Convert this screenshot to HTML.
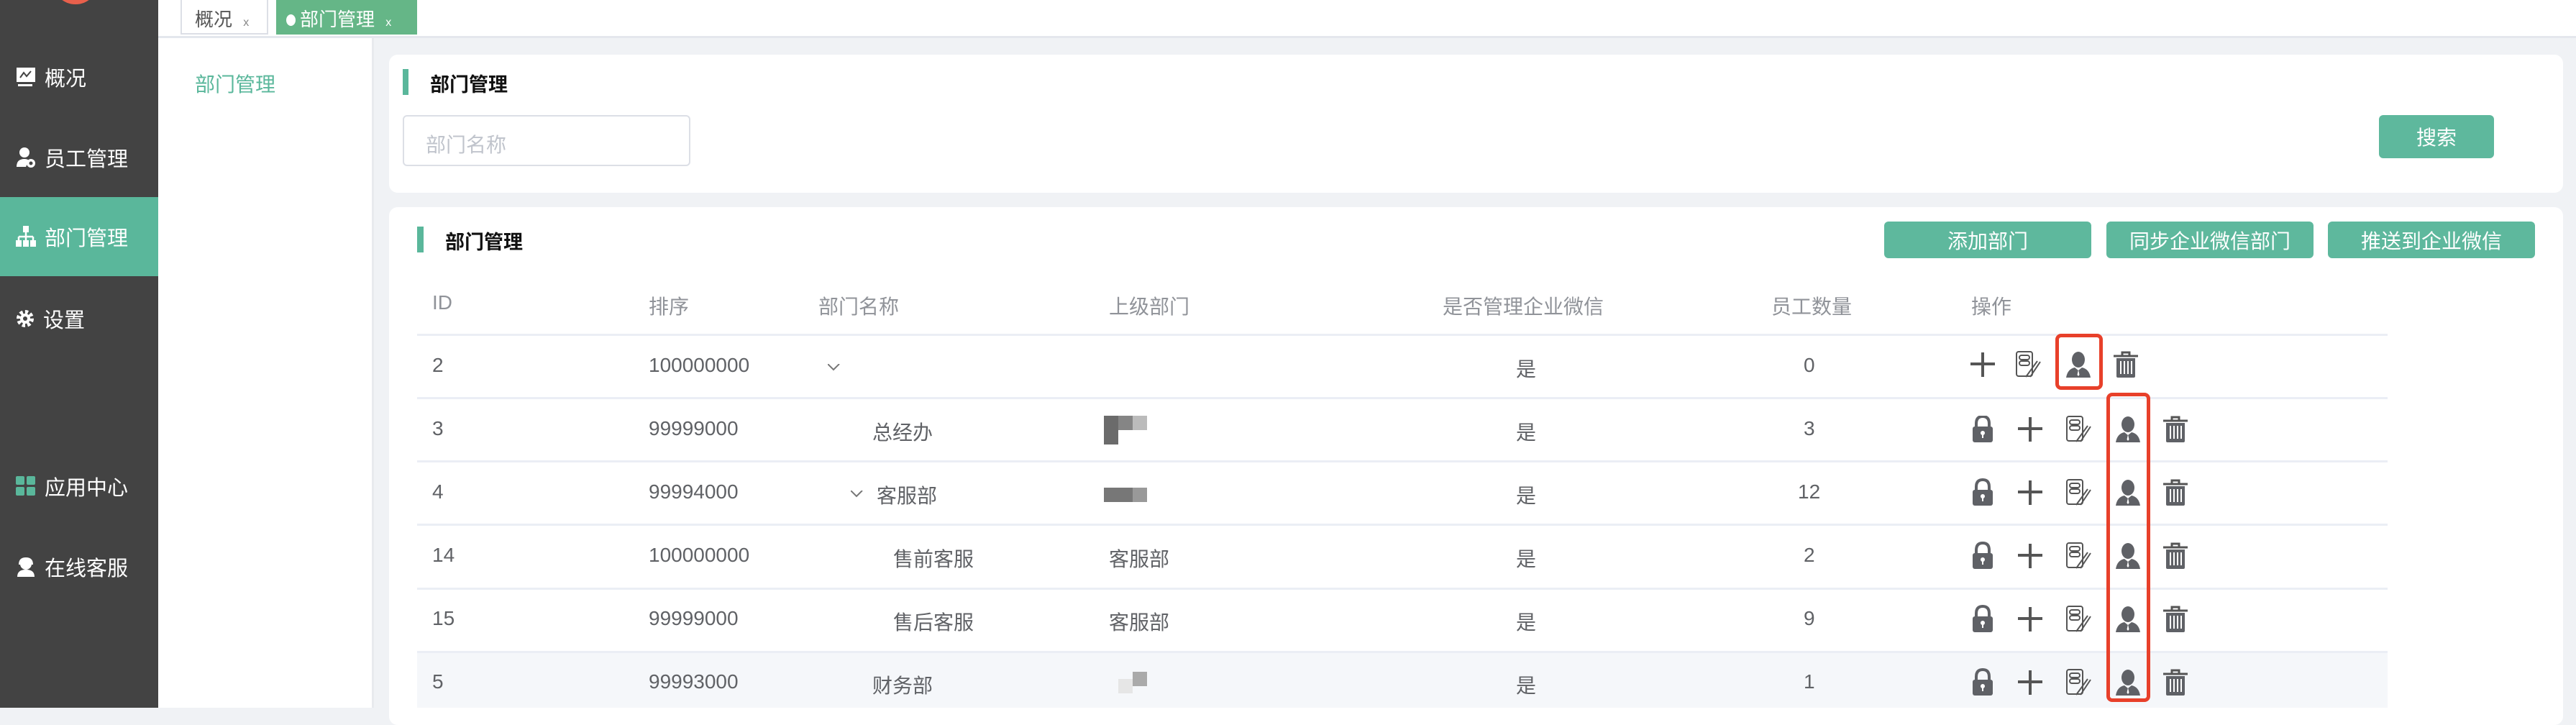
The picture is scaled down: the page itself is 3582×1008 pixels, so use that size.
<!DOCTYPE html>
<html><head><meta charset="utf-8"><style>
*{margin:0;padding:0;box-sizing:border-box}
body{width:3582px;height:984px;overflow:hidden;background:#f0f2f5;font-family:"Liberation Sans","Noto Sans CJK SC",sans-serif;position:relative}
.a{position:absolute;white-space:nowrap}
.side{left:0;top:0;width:220px;height:984px;background:#434343}
.si{left:0;width:220px;height:110px;color:#fff;font-size:29px;display:flex;align-items:center;padding-left:22px}
.si svg{margin-right:12px}
.card{background:#fff;border-radius:12px}
.btn{background:#5eb89d;color:#fff;font-size:28px;border-radius:6px;display:flex;align-items:center;justify-content:center}
.th{color:#909399;font-size:28px;top:405px}
.td{color:#606266;font-size:28px}
.line{left:580px;width:2740px;height:3px;background:#ebeef5}
</style></head><body>
<div class="a side"></div>
<div class="a" style="left:73px;top:-58px;width:64px;height:64px;border-radius:50%;background:#e8604c"></div>
<div class="a si" style="top:52px"><svg width="28" height="28" viewBox="0 0 28 28"><rect x="1" y="1" width="26" height="20" fill="#fff"/><path d="M6 15 L11 8 L15 13 L21 6" stroke="#434343" stroke-width="2" fill="none"/><rect x="3" y="24" width="20" height="3" fill="#fff"/></svg>概况</div>
<div class="a si" style="top:164px"><svg width="28" height="30" viewBox="0 0 28 30"><circle cx="12" cy="8" r="7" fill="#fff"/><path d="M1 28 Q1 17 12 17 Q16 17 18 19 L14 28 Z" fill="#fff"/><circle cx="21" cy="23" r="6" fill="#fff"/><circle cx="21" cy="23" r="2.5" fill="#434343"/></svg>员工管理</div>
<div class="a si" style="top:274px;background:#5ab79b"><svg width="28" height="30" viewBox="0 0 28 30"><rect x="10" y="0" width="8" height="9" fill="#fff"/><path d="M14 9 V15 M4 15 H24 M4 15 V20 M14 15 V20 M24 15 V20" stroke="#fff" stroke-width="2.5" fill="none"/><rect x="0" y="20" width="8" height="9" fill="#fff"/><rect x="10" y="20" width="8" height="9" fill="#fff"/><rect x="20" y="20" width="8" height="9" fill="#fff"/></svg>部门管理</div>
<div class="a si" style="top:388px"><svg width="26" height="26" viewBox="0 0 26 26"><circle cx="13" cy="13" r="9" fill="none" stroke="#fff" stroke-width="6" stroke-dasharray="4 3"/><circle cx="13" cy="13" r="7" fill="#fff"/><circle cx="13" cy="13" r="3" fill="#434343"/></svg>设置</div>
<div class="a si" style="top:621px"><svg width="28" height="28" viewBox="0 0 28 28"><rect x="0" y="0" width="12" height="12" rx="2" fill="#5ab79b"/><rect x="15" y="0" width="12" height="12" rx="2" fill="#5ab79b"/><rect x="0" y="15" width="12" height="12" rx="2" fill="#5ab79b"/><rect x="15" y="15" width="12" height="12" rx="2" fill="#5ab79b"/></svg>应用中心</div>
<div class="a si" style="top:733px"><svg width="28" height="28" viewBox="0 0 28 28"><circle cx="14" cy="10" r="8" fill="#fff"/><path d="M2 28 Q2 18 14 18 Q26 18 26 28 Z" fill="#fff"/><path d="M5 11 Q5 2 14 2 Q23 2 23 11" stroke="#fff" stroke-width="2" fill="none"/></svg>在线客服</div>
<!-- tabs -->
<div class="a" style="left:220px;top:0;width:3362px;height:53px;background:#fff;border-bottom:3px solid #e4e7ed"></div>
<div class="a" style="left:251px;top:0;width:122px;height:48px;border:2px solid #dcdfe6;border-top:0;background:#fff;font-size:26px;color:#555;padding:7px 0 0 18px">概况 <span style="font-size:16px;color:#888;margin-left:8px">x</span></div>
<div class="a" style="left:384px;top:0;width:196px;height:48px;background:#65b687;font-size:26px;color:#fff;padding:7px 0 0 14px"><span style="display:inline-block;width:13px;height:16px;border-radius:50%;background:#fff;margin-right:6px"></span>部门管理 <span style="font-size:16px;margin-left:8px">x</span></div>
<!-- second sidebar -->
<div class="a" style="left:220px;top:53px;width:300px;height:931px;background:#fff;border-right:3px solid #e8eaee"></div>
<div class="a" style="left:271px;top:96px;font-size:28px;color:#5ab79b">部门管理</div>
<!-- card1 -->
<div class="a card" style="left:541px;top:76px;width:3023px;height:192px"></div>
<div class="a" style="left:560px;top:96px;width:8px;height:36px;background:#5ab79b"></div>
<div class="a" style="left:598px;top:96px;font-size:27px;font-weight:bold;color:#111">部门管理</div>
<div class="a" style="left:560px;top:160px;width:400px;height:71px;border:2px solid #dcdfe6;border-radius:6px;font-size:28px;color:#c0c4cc;padding:18px 0 0 30px">部门名称</div>
<div class="a btn" style="left:3308px;top:160px;width:160px;height:60px">搜索</div>
<!-- card2 -->
<div class="a card" style="left:541px;top:288px;width:3023px;height:720px"></div>
<div class="a" style="left:580px;top:315px;width:9px;height:36px;background:#5ab79b"></div>
<div class="a" style="left:619px;top:315px;font-size:27px;font-weight:bold;color:#111">部门管理</div>
<div class="a btn" style="left:2620px;top:308px;width:288px;height:51px">添加部门</div>
<div class="a btn" style="left:2929px;top:308px;width:288px;height:51px">同步企业微信部门</div>
<div class="a btn" style="left:3237px;top:308px;width:288px;height:51px">推送到企业微信</div>
<div class="a th" style="left:601px">ID</div>
<div class="a th" style="left:902px">排序</div>
<div class="a th" style="left:1138px">部门名称</div>
<div class="a th" style="left:1542px">上级部门</div>
<div class="a th" style="left:2006px">是否管理企业微信</div>
<div class="a th" style="left:2463px">员工数量</div>
<div class="a th" style="left:2741px">操作</div>
<div class="a" style="left:580px;top:906px;width:2740px;height:78px;background:#f5f7fa"></div>
<div class="a line" style="top:464px"></div>
<div class="a line" style="top:552px"></div>
<div class="a line" style="top:640px"></div>
<div class="a line" style="top:728px"></div>
<div class="a line" style="top:817px"></div>
<div class="a line" style="top:905px"></div>
<svg width="0" height="0" style="position:absolute"><defs>
<g id="plus"><path d="M0 16 H34 M17 0 V34" stroke="#555" stroke-width="4"/></g>
<g id="edit"><rect x="1" y="1" width="22" height="34" rx="3" fill="none" stroke="#555" stroke-width="2"/><rect x="5" y="6" width="14" height="6" rx="3" fill="none" stroke="#555" stroke-width="2"/><rect x="5" y="14" width="14" height="6" rx="3" fill="none" stroke="#555" stroke-width="2"/><path d="M14 36 L30 14 M20 36 L34 15" stroke="#555" stroke-width="2"/></g>
<g id="user"><ellipse cx="17" cy="11" rx="9" ry="11" fill="#5f6166"/><path d="M0 36 Q2 24 12 22 L17 26 L22 22 Q32 24 34 36 Z" fill="#5f6166"/><path d="M17 25 L15.5 32 L17 34 L18.5 32 Z" fill="#fff"/></g>
<g id="trash"><path d="M0 6 H34 M12 6 V1 H22 V6" stroke="#555" stroke-width="3" fill="none"/><path d="M4 9 H30 V34 Q30 36 28 36 H6 Q4 36 4 34 Z" fill="#5f6166"/><path d="M10 13 V31 M15 13 V31 M20 13 V31 M25 13 V31" stroke="#fff" stroke-width="2"/></g>
<g id="lock"><path d="M5 16 V11 Q5 1 14 1 Q23 1 23 11 V16" stroke="#5f6166" stroke-width="4" fill="none"/><rect x="0" y="15" width="28" height="22" rx="3" fill="#5f6166"/><circle cx="14" cy="24" r="3" fill="#fff"/><rect x="13" y="24" width="2" height="7" fill="#fff"/></g>
<g id="chev"><path d="M0 0 L8 8 L16 0" stroke="#777" stroke-width="2" fill="none"/></g>
</defs></svg>
<!-- rows -->
<div class="a td" style="left:601px;top:492px">2</div><div class="a td" style="left:902px;top:492px">100000000</div>
<svg class="a" style="left:1151px;top:506px" width="18" height="10"><use href="#chev"/></svg>
<div class="a td" style="left:2108px;top:492px">是</div><div class="a td" style="left:2508px;top:492px">0</div>
<svg class="a" style="left:2740px;top:488px" width="300" height="40"><use href="#plus" x="0" y="2"/><use href="#edit" x="63" y="0"/><use href="#user" x="133" y="1"/><use href="#trash" x="199" y="1"/></svg>

<div class="a td" style="left:601px;top:580px">3</div><div class="a td" style="left:902px;top:580px">99999000</div><div class="a td" style="left:1213px;top:580px">总经办</div>
<div class="a" style="left:1535px;top:578px;width:20px;height:40px;background:#6b6b6b"></div><div class="a" style="left:1555px;top:578px;width:20px;height:20px;background:#858585"></div><div class="a" style="left:1575px;top:578px;width:20px;height:20px;background:#bbb"></div>
<div class="a td" style="left:2108px;top:580px">是</div><div class="a td" style="left:2508px;top:580px">3</div>

<div class="a td" style="left:601px;top:668px">4</div><div class="a td" style="left:902px;top:668px">99994000</div>
<svg class="a" style="left:1183px;top:682px" width="18" height="10"><use href="#chev"/></svg><div class="a td" style="left:1219px;top:668px">客服部</div>
<div class="a" style="left:1535px;top:678px;width:40px;height:20px;background:#777"></div><div class="a" style="left:1575px;top:678px;width:20px;height:20px;background:#999"></div>
<div class="a td" style="left:2108px;top:668px">是</div><div class="a td" style="left:2500px;top:668px">12</div>

<div class="a td" style="left:601px;top:756px">14</div><div class="a td" style="left:902px;top:756px">100000000</div><div class="a td" style="left:1242px;top:756px">售前客服</div><div class="a td" style="left:1542px;top:756px">客服部</div>
<div class="a td" style="left:2108px;top:756px">是</div><div class="a td" style="left:2508px;top:756px">2</div>

<div class="a td" style="left:601px;top:844px">15</div><div class="a td" style="left:902px;top:844px">99999000</div><div class="a td" style="left:1242px;top:844px">售后客服</div><div class="a td" style="left:1542px;top:844px">客服部</div>
<div class="a td" style="left:2108px;top:844px">是</div><div class="a td" style="left:2508px;top:844px">9</div>

<div class="a td" style="left:601px;top:932px">5</div><div class="a td" style="left:902px;top:932px">99993000</div><div class="a td" style="left:1213px;top:932px">财务部</div>
<div class="a" style="left:1575px;top:934px;width:20px;height:20px;background:#aaa"></div><div class="a" style="left:1555px;top:944px;width:20px;height:20px;background:#e6e6e6"></div>
<div class="a td" style="left:2108px;top:932px">是</div><div class="a td" style="left:2508px;top:932px">1</div>

<svg class="a" style="left:2743px;top:578px" width="300" height="400">
<g><use href="#lock" x="0" y="0"/><use href="#plus" x="63" y="2"/><use href="#edit" x="130" y="0"/><use href="#user" x="199" y="1"/><use href="#trash" x="265" y="1"/></g>
<g transform="translate(0,88)"><use href="#lock" x="0" y="0"/><use href="#plus" x="63" y="2"/><use href="#edit" x="130" y="0"/><use href="#user" x="199" y="1"/><use href="#trash" x="265" y="1"/></g>
<g transform="translate(0,176)"><use href="#lock" x="0" y="0"/><use href="#plus" x="63" y="2"/><use href="#edit" x="130" y="0"/><use href="#user" x="199" y="1"/><use href="#trash" x="265" y="1"/></g>
<g transform="translate(0,264)"><use href="#lock" x="0" y="0"/><use href="#plus" x="63" y="2"/><use href="#edit" x="130" y="0"/><use href="#user" x="199" y="1"/><use href="#trash" x="265" y="1"/></g>
<g transform="translate(0,352)"><use href="#lock" x="0" y="0"/><use href="#plus" x="63" y="2"/><use href="#edit" x="130" y="0"/><use href="#user" x="199" y="1"/><use href="#trash" x="265" y="1"/></g>
</svg>
<div class="a" style="left:2858px;top:464px;width:66px;height:78px;border:5px solid #e8402a;border-radius:8px"></div>
<div class="a" style="left:2929px;top:546px;width:61px;height:430px;border:5px solid #e8402a;border-radius:8px"></div>
</body></html>
